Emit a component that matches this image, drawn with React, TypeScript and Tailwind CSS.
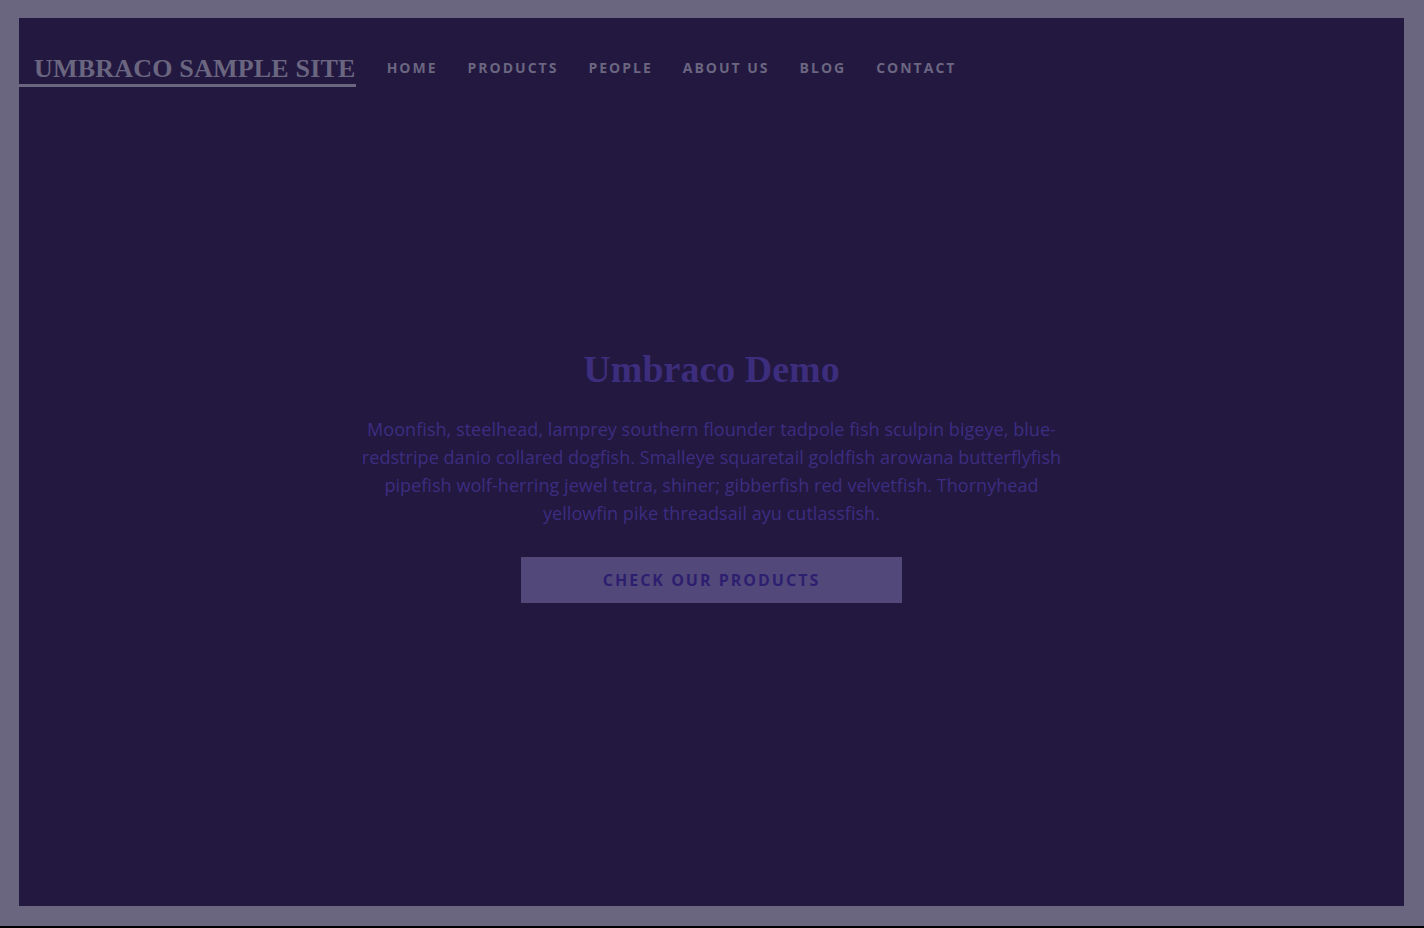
export default function App() {
  const nav = ["HOME", "PRODUCTS", "PEOPLE", "ABOUT US", "BLOG", "CONTACT"];
  return (
    <div className="w-[1424px] h-[928px] bg-[#6b6680] flex flex-col overflow-hidden">
      <div className="flex-1 pt-[18px] pl-[19px] pr-[20px] pb-[20px] flex">
        <div className="flex-1 bg-[#221840] flex flex-col">
          <header className="flex items-center h-[70px] mt-[18px]">
            <div className="flex flex-col">
              <div
                className="pl-[15px] text-[26px] font-bold tracking-[0.2px] leading-[28px] text-[#6b6680]"
                style={{ fontFamily: '"Liberation Serif", "DejaVu Serif", serif' }}
              >
                UMBRACO SAMPLE SITE
              </div>
              <div className="h-[3px] bg-[#6b6680] mt-[1px]" />
            </div>
            <nav
              className="flex items-center gap-[30px] ml-[31px] -mt-[8px] text-[14px] font-bold tracking-[2px] text-[#6b6680]"
              style={{ fontFamily: '"Open Sans", "Noto Sans", sans-serif' }}
            >
              {nav.map((n) => (
                <span key={n}>{n}</span>
              ))}
            </nav>
          </header>
          <main className="flex flex-col items-center mt-[239px]">
            <h1
              className="text-[38px] font-bold leading-[48px] text-[#3d2d7d]"
              style={{ fontFamily: '"Liberation Serif", "DejaVu Serif", serif' }}
            >
              Umbraco Demo
            </h1>
            <p
              className="mt-[22px] w-[710px] text-center text-[18px] leading-[28px] text-[#3d2d80] tracking-[0.05px]"
              style={{ fontFamily: '"Open Sans", "Noto Sans", sans-serif' }}
            >
              Moonfish, steelhead, lamprey southern flounder tadpole fish sculpin bigeye, blue-redstripe danio collared dogfish. Smalleye squaretail goldfish arowana butterflyfish pipefish wolf-herring jewel tetra, shiner; gibberfish red velvetfish. Thornyhead yellowfin pike threadsail ayu cutlassfish.
            </p>
            <button
              className="mt-[30px] w-[381px] h-[46px] bg-[#53487a] text-[16px] font-bold tracking-[2px] text-[#2d1f6f]"
              style={{ fontFamily: '"Open Sans", "Noto Sans", sans-serif' }}
            >
              CHECK OUR PRODUCTS
            </button>
          </main>
        </div>
      </div>
      <div className="h-[2px] bg-black" />
    </div>
  );
}
